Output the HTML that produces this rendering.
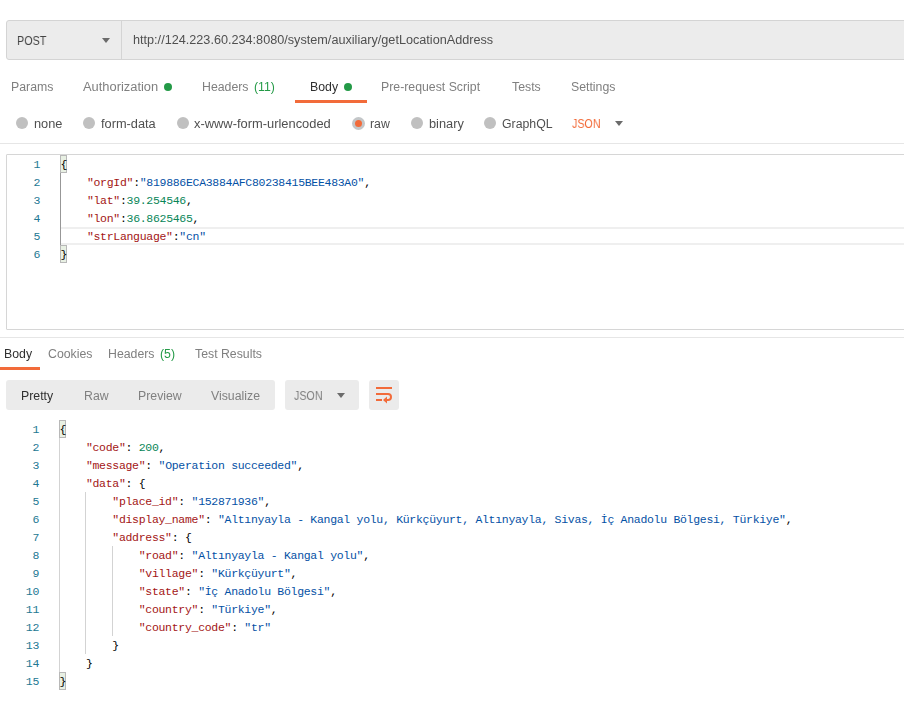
<!DOCTYPE html>
<html><head><meta charset="utf-8"><style>
html,body{margin:0;padding:0;background:#fff;}
body{width:904px;height:719px;position:relative;overflow:hidden;}
.t{position:absolute;white-space:pre;line-height:20px;font-family:"Liberation Sans", sans-serif;will-change:transform;}
.c{position:absolute;white-space:pre;font-family:"Liberation Mono", monospace;font-size:11.5px;letter-spacing:-0.3px;line-height:18px;height:18px;margin-top:1px;}
.ln{position:absolute;text-align:right;font-family:"Liberation Mono", monospace;font-size:11.5px;letter-spacing:-0.3px;line-height:18px;margin-top:1px;color:#237893;}
</style></head><body>
<div style="position:absolute;left:6px;top:20px;width:940px;height:38px;background:#ececec;border:1px solid #d4d4d4;border-radius:3px;"></div>
<div style="position:absolute;left:121px;top:21px;width:1px;height:38px;background:#d4d4d4;"></div>
<div class="t" style="left:17.00px;top:30.74px;font-size:12.3px;color:#444444;transform:scaleX(0.8750);transform-origin:0 0;">POST</div>
<svg style="position:absolute;left:102px;top:38px" width="8" height="5"><path d="M0 0H8L4 5Z" fill="#6b6b6b"/></svg>
<div class="t" style="left:132.50px;top:29.74px;font-size:12.3px;color:#505050;transform:scaleX(1.0290);transform-origin:0 0;">http://124.223.60.234:8080/system/auxiliary/getLocationAddress</div>
<div class="t" style="left:11.00px;top:76.74px;font-size:12.3px;color:#808080;">Params</div>
<div class="t" style="left:83.00px;top:76.74px;font-size:12.3px;color:#808080;transform:scaleX(1.0470);transform-origin:0 0;">Authorization</div>
<div class="t" style="left:202.00px;top:76.74px;font-size:12.3px;color:#808080;">Headers</div>
<div class="t" style="left:310.00px;top:76.74px;font-size:12.3px;color:#303030;">Body</div>
<div class="t" style="left:381.00px;top:76.74px;font-size:12.3px;color:#808080;">Pre-request Script</div>
<div class="t" style="left:512.00px;top:76.74px;font-size:12.3px;color:#808080;">Tests</div>
<div class="t" style="left:571.00px;top:76.74px;font-size:12.3px;color:#808080;">Settings</div>
<div class="t" style="left:254.00px;top:76.74px;font-size:12.3px;color:#249a47;">(11)</div>
<div style="position:absolute;left:164px;top:83px;width:8px;height:8px;background:#249a47;border-radius:50%;"></div>
<div style="position:absolute;left:344px;top:83px;width:8px;height:8px;background:#249a47;border-radius:50%;"></div>
<div style="position:absolute;left:295px;top:100px;width:72px;height:3px;background:#f26b3a;"></div>
<div style="position:absolute;left:16px;top:117px;width:12px;height:12px;border-radius:50%;background:#c0c0c0;"></div>
<div class="t" style="left:34.00px;top:113.74px;font-size:12.3px;color:#505050;transform:scaleX(1.0400);transform-origin:0 0;">none</div>
<div style="position:absolute;left:83px;top:117px;width:12px;height:12px;border-radius:50%;background:#c0c0c0;"></div>
<div class="t" style="left:101.00px;top:113.74px;font-size:12.3px;color:#505050;transform:scaleX(1.0400);transform-origin:0 0;">form-data</div>
<div style="position:absolute;left:177px;top:117px;width:12px;height:12px;border-radius:50%;background:#c0c0c0;"></div>
<div class="t" style="left:194.00px;top:113.74px;font-size:12.3px;color:#505050;transform:scaleX(1.0480);transform-origin:0 0;">x-www-form-urlencoded</div>
<div style="position:absolute;left:352.0px;top:117px;width:13px;height:13px;border-radius:50%;background:#c3c6c8;"></div>
<div style="position:absolute;left:355.0px;top:120px;width:7px;height:7px;border-radius:50%;background:#f26b3a;"></div>
<div class="t" style="left:370.00px;top:113.74px;font-size:12.3px;color:#505050;">raw</div>
<div style="position:absolute;left:411px;top:117px;width:12px;height:12px;border-radius:50%;background:#c0c0c0;"></div>
<div class="t" style="left:429.00px;top:113.74px;font-size:12.3px;color:#505050;transform:scaleX(1.0400);transform-origin:0 0;">binary</div>
<div style="position:absolute;left:484px;top:117px;width:12px;height:12px;border-radius:50%;background:#c0c0c0;"></div>
<div class="t" style="left:502.00px;top:113.74px;font-size:12.3px;color:#505050;">GraphQL</div>
<div class="t" style="left:572.00px;top:113.74px;font-size:12.3px;color:#f26b3a;transform:scaleX(0.8700);transform-origin:0 0;">JSON</div>
<svg style="position:absolute;left:615px;top:121px" width="8" height="5"><path d="M0 0H8L4 5Z" fill="#6b6b6b"/></svg>
<div style="position:absolute;left:0px;top:143px;width:904px;height:1px;background:#e6e6e6;"></div>
<div style="position:absolute;left:6px;top:154px;width:940px;height:174px;border:1px solid #d6d6d6;border-radius:1px;"></div>
<div style="position:absolute;left:61px;top:227px;width:900px;height:14px;border-top:2px solid #efefef;border-bottom:2px solid #efefef;"></div>
<div style="position:absolute;left:60px;top:173px;width:1px;height:72px;background:#979797;"></div>
<div style="position:absolute;left:60px;top:155px;width:5px;height:16px;background:#e8f0e3;border:1px solid #b8b8b8;"></div>
<div style="position:absolute;left:60px;top:245px;width:5px;height:16px;background:#e8f0e3;border:1px solid #b8b8b8;"></div>
<div class="ln" style="left:0px;top:155px;width:40px">1</div>
<div class="c" style="left:60.5px;top:155px"><span style="color:#000000">{</span></div>
<div class="ln" style="left:0px;top:173px;width:40px">2</div>
<div class="c" style="left:60.5px;top:173px"><span style="color:#000000">    </span><span style="color:#a31515">&quot;orgId&quot;</span><span style="color:#000000">:</span><span style="color:#0451a5">&quot;819886ECA3884AFC80238415BEE483A0&quot;</span><span style="color:#000000">,</span></div>
<div class="ln" style="left:0px;top:191px;width:40px">3</div>
<div class="c" style="left:60.5px;top:191px"><span style="color:#000000">    </span><span style="color:#a31515">&quot;lat&quot;</span><span style="color:#000000">:</span><span style="color:#098658">39.254546</span><span style="color:#000000">,</span></div>
<div class="ln" style="left:0px;top:209px;width:40px">4</div>
<div class="c" style="left:60.5px;top:209px"><span style="color:#000000">    </span><span style="color:#a31515">&quot;lon&quot;</span><span style="color:#000000">:</span><span style="color:#098658">36.8625465</span><span style="color:#000000">,</span></div>
<div class="ln" style="left:0px;top:227px;width:40px">5</div>
<div class="c" style="left:60.5px;top:227px"><span style="color:#000000">    </span><span style="color:#a31515">&quot;strLanguage&quot;</span><span style="color:#000000">:</span><span style="color:#0451a5">&quot;cn&quot;</span></div>
<div class="ln" style="left:0px;top:245px;width:40px">6</div>
<div class="c" style="left:60.5px;top:245px"><span style="color:#000000">}</span></div>
<div style="position:absolute;left:0px;top:337px;width:904px;height:1px;background:#e6e6e6;"></div>
<div class="t" style="left:4.00px;top:343.74px;font-size:12.3px;color:#303030;">Body</div>
<div class="t" style="left:48.00px;top:343.74px;font-size:12.3px;color:#808080;">Cookies</div>
<div class="t" style="left:108.00px;top:343.74px;font-size:12.3px;color:#808080;">Headers</div>
<div class="t" style="left:195.00px;top:343.74px;font-size:12.3px;color:#808080;">Test Results</div>
<div class="t" style="left:160.00px;top:343.74px;font-size:12.3px;color:#249a47;">(5)</div>
<div style="position:absolute;left:0px;top:367px;width:40px;height:3px;background:#f26b3a;"></div>
<div style="position:absolute;left:6px;top:380px;width:269px;height:30px;background:#ebebeb;border-radius:3px;"></div>
<div style="position:absolute;left:285px;top:380px;width:74px;height:30px;background:#ebebeb;border-radius:3px;"></div>
<div style="position:absolute;left:369px;top:380px;width:30px;height:30px;background:#ebebeb;border-radius:3px;"></div>
<div class="t" style="left:21.00px;top:385.74px;font-size:12.3px;color:#303030;">Pretty</div>
<div class="t" style="left:84.00px;top:385.74px;font-size:12.3px;color:#808080;">Raw</div>
<div class="t" style="left:138.00px;top:385.74px;font-size:12.3px;color:#808080;">Preview</div>
<div class="t" style="left:211.00px;top:385.74px;font-size:12.3px;color:#808080;">Visualize</div>
<div class="t" style="left:294.00px;top:385.74px;font-size:12.3px;color:#808080;transform:scaleX(0.8700);transform-origin:0 0;">JSON</div>
<svg style="position:absolute;left:337px;top:393px" width="8" height="5"><path d="M0 0H8L4 5Z" fill="#6b6b6b"/></svg>
<svg style="position:absolute;left:369px;top:380px" width="30" height="30"><g fill="none" stroke="#f26b3a" stroke-width="2"><path d="M7 8H23"/><path d="M7 14H19a3 3 0 0 1 0 6H17"/><path d="M7 20H13"/></g><path d="M14 20L18 16.5V23.5Z" fill="#f26b3a"/></svg>
<div style="position:absolute;left:59px;top:438px;width:1px;height:234px;background:#d3d3d3;"></div>
<div style="position:absolute;left:85px;top:492px;width:1px;height:162px;background:#d3d3d3;"></div>
<div style="position:absolute;left:112px;top:546px;width:1px;height:90px;background:#d3d3d3;"></div>
<div style="position:absolute;left:59px;top:420px;width:5px;height:16px;background:#e8f0e3;border:1px solid #b8b8b8;"></div>
<div style="position:absolute;left:59px;top:672px;width:5px;height:16px;background:#e8f0e3;border:1px solid #b8b8b8;"></div>
<div class="ln" style="left:0px;top:420px;width:39px">1</div>
<div class="c" style="left:59.5px;top:420px"><span style="color:#000000">{</span></div>
<div class="ln" style="left:0px;top:438px;width:39px">2</div>
<div class="c" style="left:59.5px;top:438px"><span style="color:#000000">    </span><span style="color:#a31515">&quot;code&quot;</span><span style="color:#000000">: </span><span style="color:#098658">200</span><span style="color:#000000">,</span></div>
<div class="ln" style="left:0px;top:456px;width:39px">3</div>
<div class="c" style="left:59.5px;top:456px"><span style="color:#000000">    </span><span style="color:#a31515">&quot;message&quot;</span><span style="color:#000000">: </span><span style="color:#0451a5">&quot;Operation succeeded&quot;</span><span style="color:#000000">,</span></div>
<div class="ln" style="left:0px;top:474px;width:39px">4</div>
<div class="c" style="left:59.5px;top:474px"><span style="color:#000000">    </span><span style="color:#a31515">&quot;data&quot;</span><span style="color:#000000">: {</span></div>
<div class="ln" style="left:0px;top:492px;width:39px">5</div>
<div class="c" style="left:59.5px;top:492px"><span style="color:#000000">        </span><span style="color:#a31515">&quot;place_id&quot;</span><span style="color:#000000">: </span><span style="color:#0451a5">&quot;152871936&quot;</span><span style="color:#000000">,</span></div>
<div class="ln" style="left:0px;top:510px;width:39px">6</div>
<div class="c" style="left:59.5px;top:510px"><span style="color:#000000">        </span><span style="color:#a31515">&quot;display_name&quot;</span><span style="color:#000000">: </span><span style="color:#0451a5">&quot;Altınyayla - Kangal yolu, Kürkçüyurt, Altınyayla, Sivas, İç Anadolu Bölgesi, Türkiye&quot;</span><span style="color:#000000">,</span></div>
<div class="ln" style="left:0px;top:528px;width:39px">7</div>
<div class="c" style="left:59.5px;top:528px"><span style="color:#000000">        </span><span style="color:#a31515">&quot;address&quot;</span><span style="color:#000000">: {</span></div>
<div class="ln" style="left:0px;top:546px;width:39px">8</div>
<div class="c" style="left:59.5px;top:546px"><span style="color:#000000">            </span><span style="color:#a31515">&quot;road&quot;</span><span style="color:#000000">: </span><span style="color:#0451a5">&quot;Altınyayla - Kangal yolu&quot;</span><span style="color:#000000">,</span></div>
<div class="ln" style="left:0px;top:564px;width:39px">9</div>
<div class="c" style="left:59.5px;top:564px"><span style="color:#000000">            </span><span style="color:#a31515">&quot;village&quot;</span><span style="color:#000000">: </span><span style="color:#0451a5">&quot;Kürkçüyurt&quot;</span><span style="color:#000000">,</span></div>
<div class="ln" style="left:0px;top:582px;width:39px">10</div>
<div class="c" style="left:59.5px;top:582px"><span style="color:#000000">            </span><span style="color:#a31515">&quot;state&quot;</span><span style="color:#000000">: </span><span style="color:#0451a5">&quot;İç Anadolu Bölgesi&quot;</span><span style="color:#000000">,</span></div>
<div class="ln" style="left:0px;top:600px;width:39px">11</div>
<div class="c" style="left:59.5px;top:600px"><span style="color:#000000">            </span><span style="color:#a31515">&quot;country&quot;</span><span style="color:#000000">: </span><span style="color:#0451a5">&quot;Türkiye&quot;</span><span style="color:#000000">,</span></div>
<div class="ln" style="left:0px;top:618px;width:39px">12</div>
<div class="c" style="left:59.5px;top:618px"><span style="color:#000000">            </span><span style="color:#a31515">&quot;country_code&quot;</span><span style="color:#000000">: </span><span style="color:#0451a5">&quot;tr&quot;</span></div>
<div class="ln" style="left:0px;top:636px;width:39px">13</div>
<div class="c" style="left:59.5px;top:636px"><span style="color:#000000">        </span><span style="color:#000000">}</span></div>
<div class="ln" style="left:0px;top:654px;width:39px">14</div>
<div class="c" style="left:59.5px;top:654px"><span style="color:#000000">    </span><span style="color:#000000">}</span></div>
<div class="ln" style="left:0px;top:672px;width:39px">15</div>
<div class="c" style="left:59.5px;top:672px"><span style="color:#000000">}</span></div>
</body></html>
